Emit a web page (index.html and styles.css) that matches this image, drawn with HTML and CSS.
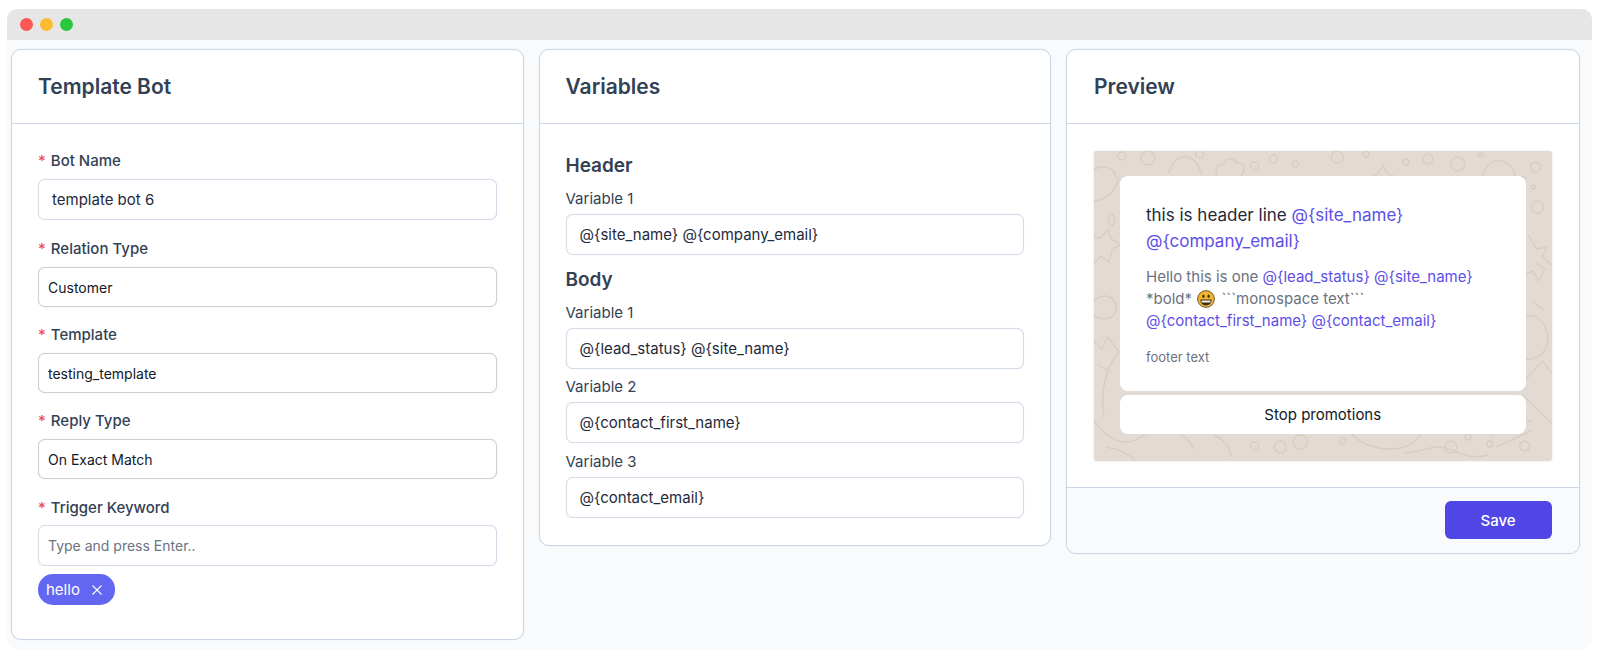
FILE: index.html
```html
<!DOCTYPE html>
<html lang="en">
<head>
    <meta charset="UTF-8">
    <meta name="viewport" content="width=device-width, initial-scale=1.0">
    <title>Template Bot</title>
    <link rel="stylesheet" href="styles.css">
</head>
<body>
    <div class="window">
        <div class="titlebar">
            <span class="dot red"></span>
            <span class="dot yellow"></span>
            <span class="dot green"></span>
        </div>

        <main class="columns">
            <section class="card card-bot">
                <h2 class="card-title">Template Bot</h2>
                <div class="card-body">
                    <div class="form-group">
                        <div class="label"><span class="req">*</span>Bot Name</div>
                        <div class="input">template bot 6</div>
                    </div>
                    <div class="form-group">
                        <div class="label"><span class="req">*</span>Relation Type</div>
                        <div class="select">Customer</div>
                    </div>
                    <div class="form-group">
                        <div class="label"><span class="req">*</span>Template</div>
                        <div class="select">testing_template</div>
                    </div>
                    <div class="form-group">
                        <div class="label"><span class="req">*</span>Reply Type</div>
                        <div class="select">On Exact Match</div>
                    </div>
                    <div class="form-group trigger">
                        <div class="label"><span class="req">*</span>Trigger Keyword</div>
                        <div class="input placeholder">Type and press Enter..</div>
                        <div class="tag">hello
                            <svg class="tag-x" viewBox="0 0 12 12" width="12" height="12" aria-hidden="true">
                                <path d="M1.5 1.5l9 9M10.5 1.5l-9 9" fill="none" stroke="currentColor" stroke-width="1.1"/>
                            </svg>
                        </div>
                    </div>
                </div>
            </section>

            <section class="card">
                <h2 class="card-title">Variables</h2>
                <div class="card-body vars">
                    <h3 class="var-heading">Header</h3>
                    <div class="var-label">Variable 1</div>
                    <div class="input var-input">@{site_name} @{company_email}</div>
                    <h3 class="var-heading body-heading">Body</h3>
                    <div class="var-label">Variable 1</div>
                    <div class="input var-input">@{lead_status} @{site_name}</div>
                    <div class="var-label">Variable 2</div>
                    <div class="input var-input">@{contact_first_name}</div>
                    <div class="var-label">Variable 3</div>
                    <div class="input var-input">@{contact_email}</div>
                </div>
            </section>

            <section class="card card-preview">
                <h2 class="card-title">Preview</h2>
                <div class="card-body preview-body">
                    <div class="chat">
                        <!-- wallpaper doodles, sits behind the message -->
                        <svg class="doodles" viewBox="0 0 459 310" preserveAspectRatio="none" aria-hidden="true">
                            <g fill="none" stroke="#d6cdc3" stroke-width="1.4">
                                <circle cx="28" cy="5" r="4"/><circle cx="54" cy="7" r="7"/><circle cx="106" cy="3" r="4"/>
                                <circle cx="161" cy="15" r="4"/><circle cx="180" cy="8" r="4"/><circle cx="202" cy="13" r="3"/>
                                <circle cx="244" cy="6" r="6"/><circle cx="273" cy="3" r="3"/><circle cx="313" cy="11" r="3"/>
                                <circle cx="335" cy="8" r="5"/><circle cx="365" cy="13" r="7"/><circle cx="388" cy="4" r="2"/>
                                <circle cx="443" cy="16" r="5"/><circle cx="445" cy="56" r="6"/><circle cx="441" cy="36" r="2"/>
                                <path d="M75 22c4-12 10-18 18-16 9 2 12 8 15 18"/>
                                <path d="M125 26c-6-8 0-14 5-12 2-8 10-8 13-2 7-2 10 6 5 12-6 6-18 8-23 2z"/>
                                <path d="M290 14c-4 7-3 8-10 11 7 2 7 2 10 11 3-8 3-9 10-11-7-3-7-4-10-11z"/>
                                <path d="M390 26c2-14 14-20 24-14 5 3 8 8 8 13m-32 1c-6 0-9 3-6 4 12 2 36 2 48-1 3-2-2-4-10-3"/>
                                <path d="M0 18c10-4 20-2 22 8M0 50c14-2 22-10 25-24"/>
                                <path d="M16 63c4 0 7 7 3 11-4 2-6-8-3-11z"/>
                                <path d="M0 112l7-7 8 6 3-12 9-6-10-5-3-9-8 8-6-1"/>
                                <path d="M0 150c8-8 20-6 22 4 2 8-4 14-12 14-4 0-8-2-10-4"/>
                                <path d="M0 190l8 8 6-12 10 14M4 214l14 8"/>
                                <path d="M26 200c-14 14-20 40-16 66"/>
                                <path d="M436 84l8 14 10-2-4 10 9 8M432 124l8-4 6 10 6-12-8-6"/>
                                <path d="M433 166c10-4 20 4 22 18 2 14-8 26-22 24"/>
                                <path d="M430 232l20-22 9 12M430 244l29 28M440 150l12 10"/>
                                <path d="M0 270c12 18 30 26 44 18 10-6 22-14 16-30"/>
                                <circle cx="161" cy="295" r="4"/><circle cx="187" cy="296" r="6"/><circle cx="207" cy="291" r="7"/>
                                <circle cx="250" cy="290" r="3"/><circle cx="358" cy="296" r="6"/><circle cx="397" cy="293" r="3"/>
                                <circle cx="432" cy="295" r="5"/><circle cx="375" cy="286" r="3"/>
                                <path d="M62 280c12-6 30 2 38 18M120 284c10 4 16 10 18 22M12 296c14 2 24 8 30 14"/>
                                <path d="M250 270c10 24 38 32 62 26 10-4 18-12 20-26"/>
                                <path d="M275 270c8 12 22 14 32 6"/>
                                <path d="M310 302c20 0 30-10 46-4 14 6 24 10 40 6"/>
                                <path d="M398 284l20-12 22-2M404 296l34-16"/>
                            </g>
                        </svg>
                        <div class="message">
                            <p class="msg-head">this is header line <span class="var">@{site_name}</span> <span class="var">@{company_email}</span></p>
                            <p class="msg-text">Hello this is one <span class="var">@{lead_status}</span> <span class="var">@{site_name}</span><br>
                                *bold*
                                <svg class="emoji" viewBox="0 0 18 18" width="18" height="18" aria-hidden="true">
                                    <circle cx="9" cy="9" r="8.4" fill="#f2b632" stroke="#4a3a1a" stroke-width="0.8"/>
                                    <ellipse cx="6.4" cy="6.3" rx="1.1" ry="1.7" fill="#3a2c12"/>
                                    <ellipse cx="11.6" cy="6.3" rx="1.1" ry="1.7" fill="#3a2c12"/>
                                    <path d="M3.4 9.6h11.2c0 3.6-2.4 5.8-5.6 5.8s-5.6-2.2-5.6-5.8z" fill="#3a2c12"/>
                                    <path d="M4.6 10.4h8.8v2H4.6z" fill="#f3f3f3"/>
                                </svg>
                                ```monospace text```<br>
                                <span class="var">@{contact_first_name}</span> <span class="var">@{contact_email}</span></p>
                            <p class="msg-footer">footer text</p>
                        </div>
                        <div class="msg-button">Stop promotions</div>
                    </div>
                </div>
                <div class="card-footer">
                    <button class="save">Save</button>
                </div>
            </section>
        </main>
    </div>
</body>
</html>
```

FILE: styles.css
```css
:root {
    --border-color: #ccd6e4;
    --text-color: #334155;
    --primary-color: #4f46e5;
    --link-color: #5d4ee8;
}

* {
    margin: 0;
    padding: 0;
    box-sizing: border-box;
}

body {
    font-family: 'Inter', sans-serif;
    color: var(--text-color);
    background-color: white;
    padding: 9px 8px 8px 7px;
}

.window {
    height: 640px;
    background-color: #f8fafc;
    border-radius: 10px;
    overflow: hidden;
}

.titlebar {
    display: flex;
    align-items: center;
    gap: 7px;
    height: 31px;
    padding-left: 13px;
    background-color: #e6e6e6;
}

.dot {
    width: 13px;
    height: 13px;
    border-radius: 50%;
}

.dot.red { background-color: #fc5753; }
.dot.yellow { background-color: #fdbc2e; }
.dot.green { background-color: #27c83f; }

.columns {
    display: flex;
    align-items: flex-start;
    gap: 15px;
    padding: 9px 0 0 4px;
}

.card {
    width: 512.5px;
    background-color: white;
    border: 1px solid var(--border-color);
    border-radius: 10px;
    box-shadow: 0 0 1px #d3dce8;
    overflow: hidden;
}

.card-bot {
    height: 591px;
}

.card-preview {
    width: 513.5px;
}

.card-title {
    height: 74px;
    padding: 0 26px;
    font-size: 21px;
    font-weight: 600;
    line-height: 73px;
    border-bottom: 1px solid var(--border-color);
}

.card-preview .card-title {
    padding-left: 27px;
}

.card-body {
    padding: 26px;
}

.form-group {
    margin-bottom: 17px;
}

.form-group:first-child {
    margin-bottom: 18px;
}

.trigger {
    margin-top: 18px;
}

.trigger .label {
    margin-bottom: 6px;
}

.label {
    font-size: 15px;
    font-weight: 500;
    line-height: 22px;
    margin-bottom: 7px;
}

.req {
    color: #f04d5a;
    margin-right: 5px;
}

.input,
.select {
    display: flex;
    align-items: center;
    background-color: white;
    border-radius: 7px;
    font-size: 15px;
}

.input {
    height: 41px;
    padding-left: 13px;
    border: 1px solid #d3dbe7;
    box-shadow: 0 0 1px #d3dbe7;
    color: #1e293b;
}

.input.placeholder {
    padding-left: 9px;
    font-size: 14px;
    color: #6b7280;
}

.select {
    height: 40px;
    padding-left: 9px;
    border: 1px solid #cfcfcf;
    box-shadow: 0 0 1px #cfcfcf;
    font-size: 14px;
    color: #111827;
}

.tag {
    display: inline-flex;
    align-items: center;
    gap: 11px;
    height: 31px;
    margin-top: 8px;
    padding: 0 12px 0 8px;
    background-color: #6366f1;
    border-radius: 15px;
    color: white;
    font-size: 15px;
}

.vars {
    padding-top: 28px;
    padding-bottom: 27px;
}

.var-heading {
    font-size: 19px;
    font-weight: 600;
    line-height: 28px;
    margin-bottom: 9px;
}

.body-heading {
    margin-top: 10.5px;
}

.var-label {
    font-size: 15px;
    line-height: 20px;
    margin-bottom: 5px;
}

.var-input {
    margin-bottom: 8.5px;
}

.var-input:last-child {
    margin-bottom: 0;
}

.preview-body {
    padding: 27px 27px 26px;
}

.chat {
    position: relative;
    height: 310px;
    padding: 25px 26px 0;
    background-color: #e3dbd3;
    border-radius: 3px;
    box-shadow: 0 0 2px rgba(0,0,0,0.15);
    overflow: hidden;
}

.doodles {
    position: absolute;
    top: 0;
    left: 0;
    width: 100%;
    height: 100%;
}

.message,
.msg-button {
    position: relative;
    background-color: white;
    border-radius: 8px;
}

.message {
    height: 215px;
    padding: 26px;
}

.msg-head {
    font-size: 17px;
    line-height: 26px;
    color: #1f2937;
    margin-bottom: 12px;
}

.msg-text {
    font-size: 15px;
    line-height: 22px;
    color: #6b7280;
    margin-bottom: 15px;
}

.emoji {
    vertical-align: -4px;
    margin: 0 2px 0 1px;
}

.msg-footer {
    font-size: 13px;
    line-height: 20px;
    color: #6b7280;
}

.var {
    color: var(--link-color);
}

.msg-button {
    height: 39px;
    margin-top: 4px;
    font-size: 15px;
    line-height: 39px;
    text-align: center;
    color: #111827;
}

.card-footer {
    display: flex;
    justify-content: flex-end;
    padding: 13px 27px 14px 26px;
    background-color: #f8fafc;
    border-top: 1px solid var(--border-color);
}

.save {
    width: 107px;
    height: 38px;
    background-color: var(--primary-color);
    border: none;
    border-radius: 6px;
    color: white;
    font-family: inherit;
    font-size: 15px;
    font-weight: 500;
}
```
